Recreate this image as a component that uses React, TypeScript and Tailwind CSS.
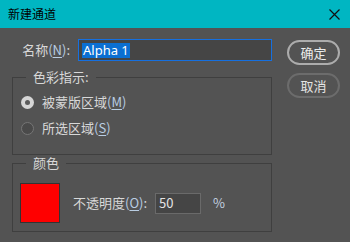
import React from "react";

const font = { fontFamily: '"Noto Sans CJK SC", "Liberation Sans", sans-serif' };

// Mnemonic suffix like "(N)", tinted as in the reference, with the key underlined.
function Key({ k }: { k: string }) {
  return (
    <span className="text-[#b9cde2]">
      (<span className="underline underline-offset-2">{k}</span>)
    </span>
  );
}

function Radio({ checked, children }: { checked?: boolean; children: React.ReactNode }) {
  return (
    <div className="flex h-[20px] items-center">
      <span
        className={
          checked
            ? "flex h-[13px] w-[13px] items-center justify-center rounded-full bg-[#d6d6d6]"
            : "h-[13px] w-[13px] rounded-full border border-[#767676] bg-[#4a4a4a]"
        }
      >
        {checked && <span className="h-[5px] w-[5px] rounded-full bg-[#5a5a5a]" />}
      </span>
      <span className="ml-[8px]">{children}</span>
    </div>
  );
}

export default function App() {
  return (
    <div className="h-[242px] w-[350px] overflow-hidden bg-[#535353] text-[13px] leading-[16px] text-[#d8d8d8]" style={font}>
      <div className="flex h-[28px] items-center justify-between bg-[#00b6c2] pl-[8px] pr-[10px] text-black">
        <span className="text-[12px]">新建通道</span>
        <svg width="11" height="11" viewBox="0 0 11 11" className="mt-[1px]">
          <path d="M0.5 0.5 L10.5 10.5 M10.5 0.5 L0.5 10.5" stroke="#111" strokeWidth="1.2" />
        </svg>
      </div>

      <div className="flex pl-[12px] pt-[11px]">
        <div className="w-[260px]">
          <div className="flex h-[22px] items-center">
            <label className="flex w-[58px] justify-end whitespace-nowrap">
              名称<Key k="N" />:
            </label>
            <div className="ml-[8px] flex h-[22px] w-[194px] items-center border border-[#1670e0] bg-[#454545] pl-[3px]">
              <span className="bg-[#0b6fd2] px-[1px] text-[13px] leading-[15px] text-white" style={{ fontFamily: '"Noto Sans", sans-serif' }}>
                Alpha 1
              </span>
            </div>
          </div>

          <fieldset className="mt-[8px] h-[86px] border border-[#3f3f3f]">
            <legend className="ml-[13px] px-[7px]">色彩指示:</legend>
            <div className="flex flex-col gap-[6px] pl-[8px] pt-[7px]">
              <Radio checked>
                被蒙版区域<Key k="M" />
              </Radio>
              <Radio>
                所选区域<Key k="S" />
              </Radio>
            </div>
          </fieldset>

          <fieldset className="h-[77px] border border-[#3f3f3f]">
            <legend className="ml-[13px] px-[7px]">颜色</legend>
            <div className="flex items-center pl-[7px] pt-[12px]">
              <div className="h-[40px] w-[40px] border border-[#333] bg-[#ff0000]" />
              <span className="ml-[13px] whitespace-nowrap">
                不透明度<Key k="O" />:
              </span>
              <div className="ml-[8px] flex h-[21px] w-[46px] items-center border border-[#6a6a6a] bg-[#454545] pl-[3px] text-[#e4e4e4]">
                50
              </div>
              <span className="ml-[12px] text-[#c4d2e0]">%</span>
            </div>
          </fieldset>
        </div>

        <div className="ml-[15px] flex w-[53px] flex-col gap-[8px] pt-[1px]">
          <button className="h-[25px] w-[53px] rounded-full border-2 border-[#acacac] text-[#ececec]">确定</button>
          <button className="h-[25px] w-[53px] rounded-full border-2 border-[#6c6c6c] text-[#e4e4e4]">取消</button>
        </div>
      </div>
    </div>
  );
}
